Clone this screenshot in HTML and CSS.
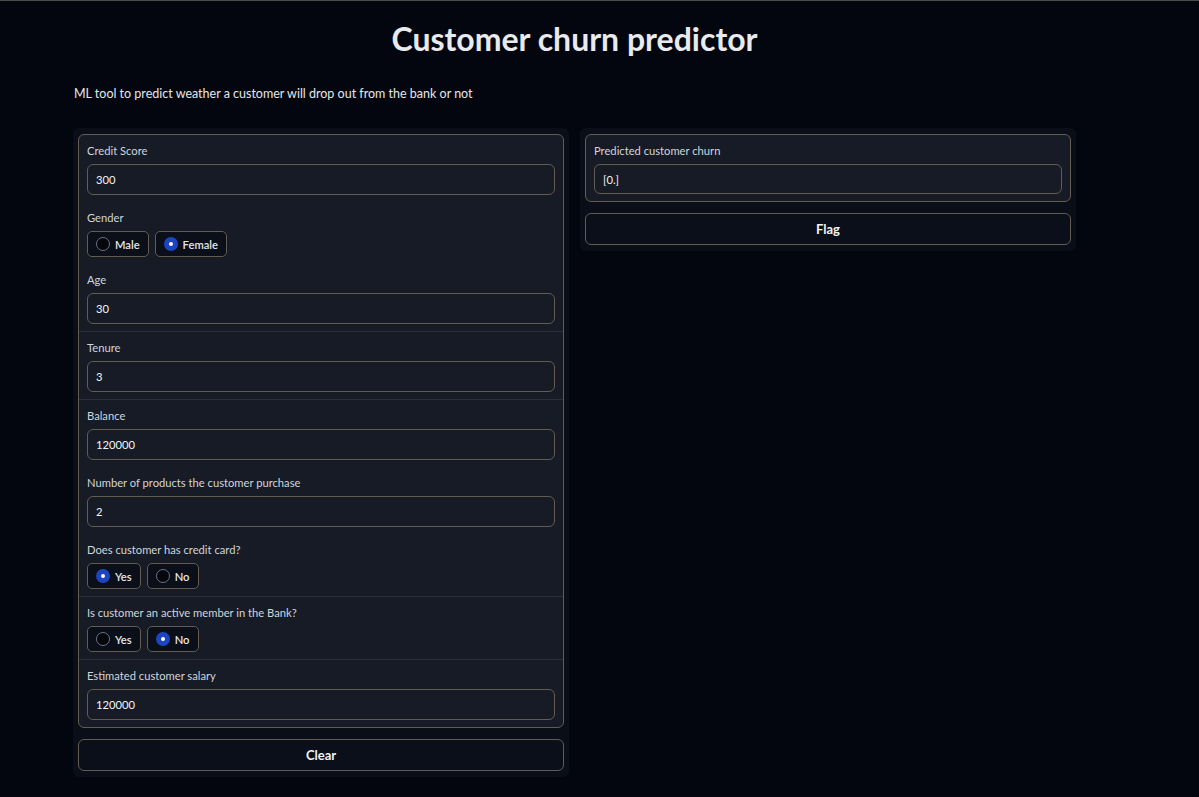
FILE: index.html
```html
<!DOCTYPE html>
<html>
<head>
<meta charset="utf-8">
<link rel="stylesheet" href="styles.css">
</head>
<body>
<div class="topline"></div>
<main class="container">
  <h1 class="title">Customer churn predictor</h1>
  <p class="desc">ML tool to predict weather a customer will drop out from the bank or not</p>
  <div class="cols">
    <div class="panel">
      <div class="form">
        <div class="block">
          <div class="label">Credit Score</div>
          <div class="input">300</div>
        </div>
        <div class="block radio-block">
          <div class="label">Gender</div>
          <div class="radios">
            <div class="radio"><span class="dot"></span>Male</div>
            <div class="radio"><span class="dot on"></span>Female</div>
          </div>
        </div>
        <div class="block sep">
          <div class="label">Age</div>
          <div class="input">30</div>
        </div>
        <div class="block sep">
          <div class="label">Tenure</div>
          <div class="input">3</div>
        </div>
        <div class="block">
          <div class="label">Balance</div>
          <div class="input">120000</div>
        </div>
        <div class="block">
          <div class="label">Number of products the customer purchase</div>
          <div class="input">2</div>
        </div>
        <div class="block radio-block sep">
          <div class="label">Does customer has credit card?</div>
          <div class="radios">
            <div class="radio"><span class="dot on"></span>Yes</div>
            <div class="radio"><span class="dot"></span>No</div>
          </div>
        </div>
        <div class="block radio-block sep">
          <div class="label">Is customer an active member in the Bank?</div>
          <div class="radios">
            <div class="radio"><span class="dot"></span>Yes</div>
            <div class="radio"><span class="dot on"></span>No</div>
          </div>
        </div>
        <div class="block">
          <div class="label">Estimated customer salary</div>
          <div class="input">120000</div>
        </div>
      </div>
      <button class="btn">Clear</button>
    </div>
    <div class="panel">
      <div class="form">
        <div class="block out">
          <div class="label">Predicted customer churn</div>
          <div class="input small">[0.]</div>
        </div>
      </div>
      <button class="btn">Flag</button>
    </div>
  </div>
</main>
</body>
</html>
```
FILE: styles.css
```css
* { box-sizing: border-box; }
html, body {
  margin: 0;
  padding: 0;
  background: #03060e;
  color: #e5e7eb;
  font-family: Lato, "Liberation Sans", sans-serif;
}
.topline {
  height: 1px;
  background: #4a4a4a;
}
.container {
  width: 1003px;
  margin-left: 73px;
  display: flex;
  flex-direction: column;
}
.title {
  margin: 17px 0 0 0;
  height: 42px;
  line-height: 42px;
  text-align: center;
  font-size: 32px;
  font-weight: 700;
  color: #e8eaee;
}
.desc {
  margin: 26px 0 0 1px;
  font-size: 12.5px;
  line-height: 16px;
  color: #e5e7eb;
}
.cols {
  margin-top: 26px;
  display: flex;
  gap: 11px;
  align-items: flex-start;
}
.panel {
  width: 496px;
  background: #0a0e18;
  border-radius: 6px;
  padding: 6px 5px 6px 5px;
  display: flex;
  flex-direction: column;
  gap: 11px;
}
.form {
  background: #161b26;
  border: 1px solid #625c51;
  border-radius: 6px;
  overflow: hidden;
}
.block {
  padding: 7px 8px 7px 8px;
  display: flex;
  flex-direction: column;
  gap: 4px;
}
.block.sep {
  border-bottom: 1px solid #2a2f3a;
}
.radio-block { gap: 4px; }
.label {
  font-size: 11.2px;
  line-height: 18px;
  color: #d1d5db;
}
.input {
  height: 31px;
  border: 1px solid #625c51;
  border-radius: 6px;
  background: #161b26;
  padding: 0 8px;
  display: flex;
  align-items: center;
  font-size: 11.2px;
  color: #f3f4f6;
}
.input.small { height: 30px; }
.radios {
  display: flex;
  gap: 6px;
}
.radio {
  height: 26px;
  border: 1px solid #625c51;
  border-radius: 5px;
  background: #0b0f19;
  padding: 0 8px 0 8px;
  display: flex;
  align-items: center;
  gap: 5px;
  font-size: 11.2px;
  font-weight: 600;
  color: #e5e7eb;
}
.dot {
  width: 14px;
  height: 14px;
  border-radius: 50%;
  border: 1px solid #6b7280;
  background: #05070d;
}
.dot.on {
  border: 4px solid #1d45c2;
  background: #ffffff;
  box-shadow: 0 0 0 1px #1d45c2;
  width: 12px;
  height: 12px;
  margin: 0 1px;
}
.btn {
  height: 32px;
  width: 100%;
  border: 1px solid #625c51;
  border-radius: 6px;
  background: #0a0f19;
  color: #f3f4f6;
  font-family: inherit;
  font-size: 13px;
  font-weight: 700;
  cursor: pointer;
}
```
